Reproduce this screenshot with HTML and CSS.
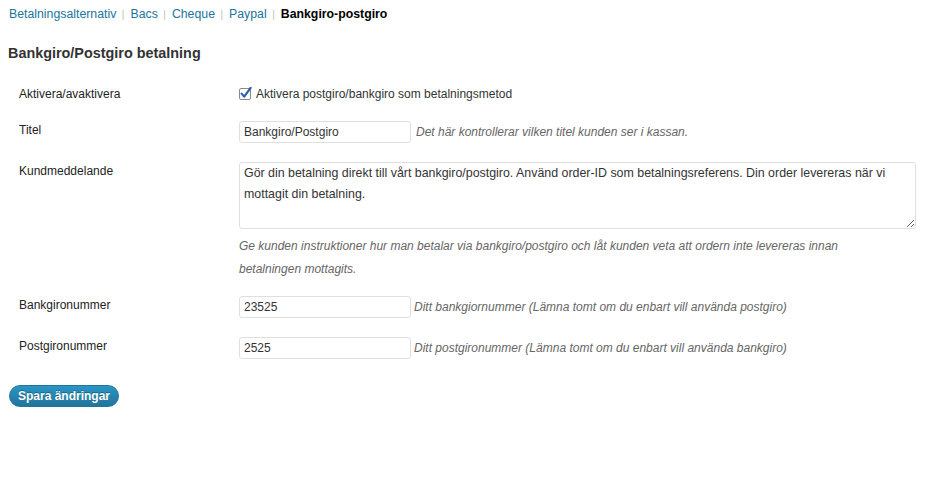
FILE: index.html
```html
<!DOCTYPE html>
<html lang="sv">
<head>
<meta charset="utf-8">
<title>Bankgiro/Postgiro betalning</title>
<link rel="stylesheet" href="styles.css">
</head>
<body>
<div class="page">
  <ul class="subnav">
    <li><a href="#">Betalningsalternativ</a><span class="sep">|</span></li>
    <li><a href="#">Bacs</a><span class="sep">|</span></li>
    <li><a href="#">Cheque</a><span class="sep">|</span></li>
    <li><a href="#">Paypal</a><span class="sep">|</span></li>
    <li class="current">Bankgiro-postgiro</li>
  </ul>

  <h3 class="title">Bankgiro/Postgiro betalning</h3>

  <div class="form">
    <div class="row">
      <div class="label">Aktivera/avaktivera</div>
      <div class="field check-field">
        <span class="checkbox" aria-hidden="true">
          <svg width="13" height="13" viewBox="0 0 13 13">
            <rect x="0.5" y="1.5" width="11" height="11" rx="1.5" fill="#fff" stroke="#8a8a8a"/>
            <path d="M2.6 6.6 L5.2 9.6 L11.6 0.8" fill="none" stroke="#2d5fb0" stroke-width="2.2" stroke-linecap="round" stroke-linejoin="round"/>
          </svg>
        </span>
        <span>Aktivera postgiro/bankgiro som betalningsmetod</span>
      </div>
    </div>

    <div class="row">
      <div class="label">Titel</div>
      <div class="field inline">
        <input class="text" type="text" value="Bankgiro/Postgiro">
        <span class="desc">Det här kontrollerar vilken titel kunden ser i kassan.</span>
      </div>
    </div>

    <div class="row">
      <div class="label">Kundmeddelande</div>
      <div class="field">
        <textarea class="area">Gör din betalning direkt till vårt bankgiro/postgiro. Använd order-ID som betalningsreferens. Din order levereras när vi mottagit din betalning.</textarea>
        <p class="desc block">Ge kunden instruktioner hur man betalar via bankgiro/postgiro och låt kunden veta att ordern inte levereras innan betalningen mottagits.</p>
      </div>
    </div>

    <div class="row">
      <div class="label">Bankgironummer</div>
      <div class="field inline">
        <input class="text" type="text" value="23525">
        <span class="desc tight">Ditt bankgiornummer (Lämna tomt om du enbart vill använda postgiro)</span>
      </div>
    </div>

    <div class="row">
      <div class="label">Postgironummer</div>
      <div class="field inline">
        <input class="text" type="text" value="2525">
        <span class="desc tight">Ditt postgironummer (Lämna tomt om du enbart vill använda bankgiro)</span>
      </div>
    </div>
  </div>

  <button class="primary" type="button">Spara ändringar</button>
</div>
</body>
</html>
```

FILE: styles.css
```css
* { box-sizing: border-box; }

html, body {
  margin: 0;
  background: #fff;
}

body {
  font-family: "Liberation Sans", Arial, Helvetica, sans-serif;
  font-size: 12px;
  color: #333;
}

.page {
  padding: 6px 0 0 9px;
}

.subnav {
  list-style: none;
  margin: 0;
  padding: 0;
  display: flex;
  line-height: 16px;
  font-size: 12.3px;
}

.subnav a {
  color: #21759b;
  text-decoration: none;
}

.subnav .sep {
  color: #bbb;
  font-size: 10px;
  margin: 0 6px 0 5.5px;
}

.subnav .current {
  color: #000;
  font-weight: bold;
}

.title {
  margin: 22px 0 0 -1px;
  font-size: 14.4px;
  font-weight: bold;
  line-height: 16px;
  color: #333;
}

.form {
  margin-top: 24px;
  padding-left: 10px;
  display: flex;
  flex-direction: column;
  gap: 19px;
}

.row {
  display: flex;
  align-items: flex-start;
}

.label {
  width: 220px;
  flex: none;
  line-height: 16px;
  padding-top: 1px;
  color: #222;
}

.field {
  flex: 1;
  min-width: 0;
}

.check-field {
  display: flex;
  align-items: flex-start;
  line-height: 16px;
  color: #333;
  margin-top: 1px;
}

.checkbox {
  display: block;
  width: 13px;
  height: 13px;
  margin: 1px 4px 0 0;
}

.checkbox svg { display: block; }

.inline {
  display: flex;
  align-items: center;
}

.text {
  width: 172px;
  height: 22px;
  border: 1px solid #dfdfdf;
  border-radius: 3px;
  padding: 0 4px;
  font-family: inherit;
  font-size: 12px;
  color: #333;
  background: #fff;
  outline: none;
}

.desc {
  font-style: italic;
  color: #666;
  margin-left: 5px;
}

.desc.tight { margin-left: 3px; }

.area {
  display: block;
  width: 677px;
  height: 67px;
  border: 1px solid #dfdfdf;
  border-radius: 3px;
  padding: 0 4px;
  font-family: inherit;
  font-size: 12.4px;
  line-height: 21px;
  color: #333;
  background: #fff;
  resize: vertical;
  outline: none;
}

.desc.block {
  margin: 6px 0 -4px 0;
  line-height: 23px;
  max-width: 640px;
}

.primary {
  margin-top: 26px;
  display: block;
  height: 22px;
  padding: 0 8px;
  border: 1px solid #21759b;
  border-radius: 11px;
  background: linear-gradient(to bottom, #2a95c5, #21759b);
  color: #fff;
  font-family: inherit;
  font-size: 12px;
  font-weight: bold;
  text-shadow: 0 -1px 0 rgba(0, 0, 0, 0.3);
  cursor: pointer;
}
```
